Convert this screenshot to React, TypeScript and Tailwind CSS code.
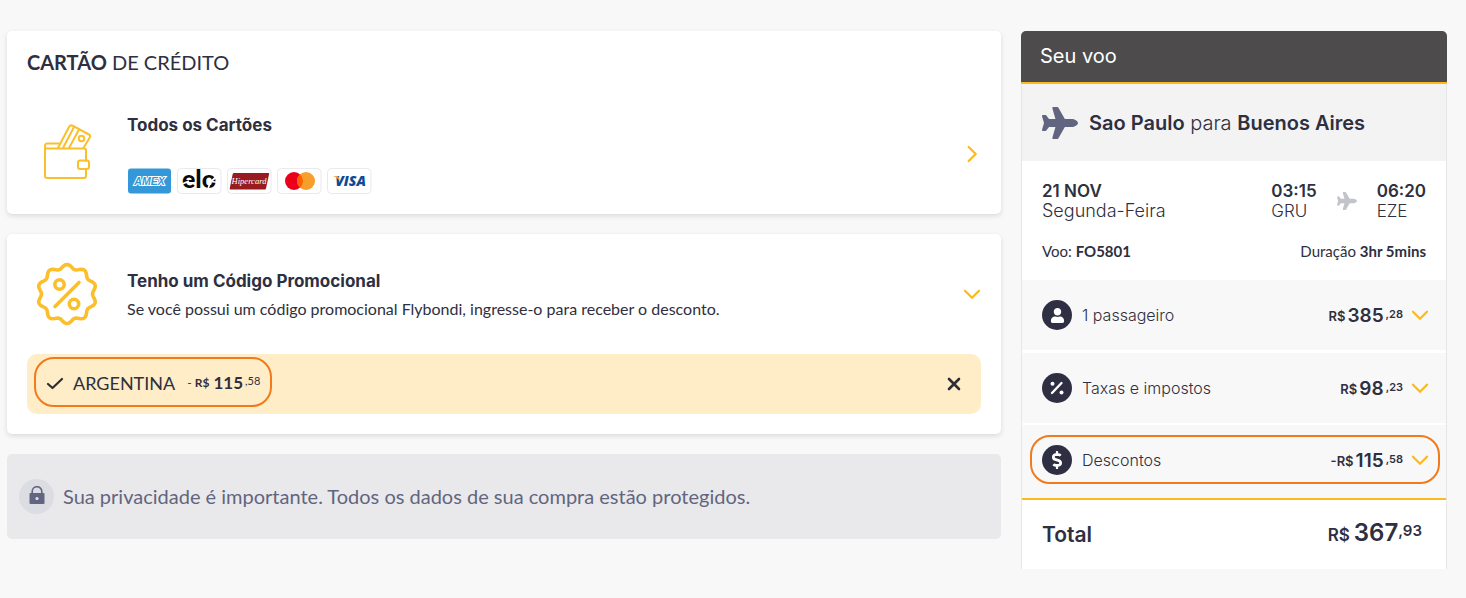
import type { ReactNode } from "react";
import { FaDollarSign, FaPlane, FaUser } from "react-icons/fa";

const badgePath =
  Array.from({ length: 120 }, (_, i) => {
    const angle = (i / 120) * Math.PI * 2;
    const radius = 27.5 + 2 * Math.cos(angle * 10);
    const x = 32 + radius * Math.sin(angle);
    const y = 32 - radius * Math.cos(angle);
    return `${i === 0 ? "M" : "L"}${x.toFixed(2)} ${y.toFixed(2)}`;
  }).join("") + "Z";

function Chevron({ className }: { className: string }) {
  return (
    <svg className={className} viewBox="0 0 18 18" fill="none" stroke="#fbba20" strokeWidth="2.3" strokeLinecap="round" strokeLinejoin="round" aria-hidden="true">
      <path d="M2 5.7 9 12.7 16 5.7" />
    </svg>
  );
}

function WalletIcon() {
  return (
    <svg className="mb-1 h-14 w-12" viewBox="0 0 48 56" fill="none" stroke="#fbbf2b" strokeWidth="2" strokeLinejoin="round" strokeLinecap="round" aria-hidden="true">
      <path d="M43 37V26.500a2 2 0 0 0-2-2H3.500a1.500 1.500 0 0 1-1.500-1.500V52a2 2 0 0 0 2 2H41a2 2 0 0 0 2-2v-6" />
      <path d="M2 23V21.500a2 2 0 0 1 2-2H16" />
      <path d="M15 24 26 3a3 3 0 0 1 4-1.200L46 10.500a2 2 0 0 1 1 2.500L40.500 24" />
      <path d="M20 24 31 3M26 24 36 5.500" />
      <circle cx="38.500" cy="14.500" r="2.800" />
      <rect x="35" y="36.500" width="11" height="8.500" rx="2" />
    </svg>
  );
}

function DiscountBadgeIcon() {
  return (
    <svg className="size-16" viewBox="0 0 64 64" fill="none" stroke="#fbbf2b" strokeWidth="3.600" strokeLinecap="round" strokeLinejoin="round" aria-hidden="true">
      <path d={badgePath} />
      <path d="M20 44.500 44 20.500" />
      <circle cx="24.500" cy="22.500" r="4.700" />
      <circle cx="39" cy="42" r="4.700" />
    </svg>
  );
}

function PercentIcon() {
  return (
    <svg className="size-4" viewBox="0 0 16 16" fill="white" aria-hidden="true">
      <path d="M3 13 12.500 3" stroke="white" strokeWidth="2.400" strokeLinecap="round" />
      <circle cx="3.500" cy="3.800" r="2" />
      <circle cx="12.500" cy="12.500" r="2" />
    </svg>
  );
}

function LockIcon() {
  return (
    <svg className="mb-1 h-[18px] w-4" viewBox="0 0 16 18" aria-hidden="true">
      <path d="M3.200 8V5.500a4.800 4.800 0 0 1 9.600 0V8" fill="none" stroke="#62657f" strokeWidth="1.600" />
      <rect x="0.500" y="7" width="15" height="11" rx="1" fill="#62657f" />
      <circle cx="8" cy="12.500" r="1.600" fill="#e2e2e8" />
    </svg>
  );
}

function CardLogos() {
  const frame = "h-[26px] w-11 overflow-visible";
  const border = <rect x="0.500" y="0.500" width="43.500" height="25" rx="4" fill="white" stroke="#e9e9ee" />;
  return (
    <span className="flex gap-1.5">
      <svg className={frame} viewBox="0 0 44 26" role="img" aria-label="Amex">
        <rect x="1" y="0.500" width="43" height="25" rx="3" fill="#3498d8" />
        <text x="22.500" y="17" textAnchor="middle" fontFamily="Liberation Sans, sans-serif" fontWeight="700" fontStyle="italic" fontSize="10.500" fill="#3498d8" stroke="white" strokeWidth="2" paintOrder="stroke">AMEX</text>
      </svg>
      <svg className={frame} viewBox="0 0 44 26" role="img" aria-label="Elo">
        {border}
        <text x="22" y="20" textAnchor="middle" fontFamily="Lato, sans-serif" fontWeight="900" fontSize="25" fill="#0a0a0a">elo</text>
        <path d="M3 17 12 13M34 13.500 39 9M34 13.500 42 14.500M33 15 31 21" stroke="white" strokeWidth="1.700" />
      </svg>
      <svg className={frame} viewBox="0 0 44 26" role="img" aria-label="Hipercard">
        {border}
        <path d="M7 5H41.500q.8 0 .6 1L39 20.500q-.2 1-1.200 1H3.500q-1 0-.8-1L5.700 6q.3-1 1.300-1Z" fill="#981b1f" />
        <text x="22" y="16" textAnchor="middle" fontFamily="Liberation Serif, serif" fontStyle="italic" fontSize="8.500" fill="white">Hipercard</text>
      </svg>
      <svg className={frame} viewBox="0 0 44 26" role="img" aria-label="Mastercard">
        {border}
        <circle cx="17" cy="13" r="9" fill="#eb001b" />
        <circle cx="29" cy="13" r="9" fill="#f79e2b" />
        <path d="M23 6.300a9 9 0 0 1 0 13.400 9 9 0 0 1 0-13.400Z" fill="#ff5f00" />
      </svg>
      <svg className={frame} viewBox="0 0 44 26" role="img" aria-label="Visa">
        {border}
        <text x="23.500" y="18" textAnchor="middle" fontFamily="Open Sans, sans-serif" fontWeight="800" fontStyle="italic" fontSize="14" fill="#0d4b95">VISA</text>
        <path d="M6 8h4q1.500 0 1.800 1.500L13 14Q11 9.500 6 8Z" fill="#f5a623" />
      </svg>
    </span>
  );
}

type PriceProps = { whole: string; cents: string; prefix?: string };

function Price({ whole, cents, prefix = "R$" }: PriceProps) {
  return (
    <span className="flex items-start pt-0.5 font-semibold leading-6">
      <span className="mr-0.5 text-[13px]">{prefix}</span>
      <span className="text-[19px]">{whole}</span>
      <span className="ml-0.5 text-[11px] leading-5">,{cents}</span>
    </span>
  );
}

function SummaryRow({ icon, label, ...price }: { icon: ReactNode; label: string } & PriceProps) {
  return (
    <button type="button" className="flex h-full w-full items-center text-left">
      <span className="flex size-[30px] items-center justify-center rounded-full bg-[#2e2f42] text-white">{icon}</span>
      <span className="ml-2.5 flex-1 text-base font-light">{label}</span>
      <Price {...price} />
      <Chevron className="ml-2 size-[18px]" />
    </button>
  );
}

export default function App() {
  return (
    <div className="flex min-h-screen items-start gap-5 bg-[#f8f8f8] pt-[31px] pr-[19px] pb-7 pl-[7px] font-['Lato',sans-serif] text-[#2e2f40]">
      <main className="flex min-w-0 flex-1 flex-col gap-5">
        <section className="rounded-[5px] bg-white p-5 shadow-[0_2px_5px_rgba(0,0,0,0.12)]">
          <h2 className="text-xl leading-[22px]"><strong className="font-bold">CARTÃO</strong> DE CRÉDITO</h2>
          <button type="button" className="mt-10 flex w-full items-center text-left">
            <span className="flex w-20 justify-center"><WalletIcon /></span>
            <span className="ml-5 flex flex-1 flex-col gap-[31px]">
              <span className="font-['Inter',sans-serif] text-[17px] font-bold leading-6">Todos os Cartões</span>
              <CardLogos />
            </span>
            <Chevron className="size-[18px] -rotate-90" />
          </button>
        </section>

        <section className="rounded-[5px] bg-white p-5 shadow-[0_2px_5px_rgba(0,0,0,0.12)]">
          <button type="button" className="flex h-20 w-full items-center text-left">
            <span className="flex w-20 justify-center"><DiscountBadgeIcon /></span>
            <span className="ml-5 flex flex-1 flex-col gap-1 pt-0.5">
              <span className="font-['Inter',sans-serif] text-[17px] font-bold leading-6">Tenho um Código Promocional</span>
              <span className="text-base leading-6">Se você possui um código promocional Flybondi, ingresse-o para receber o desconto.</span>
            </span>
            <Chevron className="size-[18px]" />
          </button>
          <div className="mt-5 flex h-[60px] justify-between rounded-[10px] bg-[#feedc7] pt-[3px] pr-5 pb-[7px] pl-[7px]">
            <div className="flex items-center rounded-[20px] border-2 border-[#f07a1c] px-2.5 pt-0.5">
              <svg className="h-4 w-[18px]" viewBox="0 0 18 16" fill="none" stroke="#2e2d33" strokeWidth="2.200" strokeLinecap="round" strokeLinejoin="round" aria-hidden="true">
                <path d="M2 9 6.500 13 16 4" />
              </svg>
              <span className="ml-[9px] text-lg">ARGENTINA</span>
              <span className="ml-3 flex items-start leading-6">
                <span className="mr-1 text-xs leading-6">- <b>R$</b></span>
                <b className="text-[17px] leading-6">115</b>
                <span className="ml-0.5 text-[11px] leading-5">,58</span>
              </span>
            </div>
            <button type="button" aria-label="Remover código" className="flex items-center pt-1">
              <svg className="size-3.5" viewBox="0 0 14 14" stroke="#2e2d33" strokeWidth="2.600" strokeLinecap="round" aria-hidden="true">
                <path d="M2 2 12 12M12 2 2 12" />
              </svg>
            </button>
          </div>
        </section>

        <section className="flex h-[85px] items-center rounded-[5px] bg-[#e9e9eb] px-3 text-[#62657f]">
          <span className="flex size-[35px] items-center justify-center rounded-full bg-[#dcdce3]"><LockIcon /></span>
          <p className="ml-[9px] pb-0.5 text-xl">Sua privacidade é importante. Todos os dados de sua compra estão protegidos.</p>
        </section>
      </main>

      <aside className="w-[426px] shrink-0 font-['Inter',sans-serif]">
        <h2 className="rounded-t-[5px] border-b-2 border-[#fbba20] bg-[#4d4b4b] px-[19px] py-3 text-xl leading-[27px] text-white">Seu voo</h2>
        <div className="border-x border-[#e6e6e6] bg-white">
          <div className="flex h-[77px] items-center bg-[#f3f3f3] px-5">
            <FaPlane className="h-8 w-9 text-[#62657f]" preserveAspectRatio="none" />
            <p className="ml-[11px] text-xl font-light"><b className="font-semibold">Sao Paulo</b> para <b className="font-semibold">Buenos Aires</b></p>
          </div>

          <div className="h-[119px] px-5 pt-5">
            <div className="flex text-[17px] leading-5 font-light">
              <p className="flex-1"><b className="block font-semibold">21 NOV</b><span className="text-lg leading-5">Segunda-Feira</span></p>
              <p><b className="block font-semibold">03:15</b>GRU</p>
              <FaPlane className="mx-5 mt-2.5 size-5 text-[#c3c4ca]" />
              <p><b className="block font-semibold">06:20</b>EZE</p>
            </div>
            <div className="mt-[18px] flex justify-between font-['Lato',sans-serif] text-[15px] leading-6">
              <p>Voo: <b>FO5801</b></p>
              <p>Duração <b>3hr 5mins</b></p>
            </div>
          </div>

          <div className="h-[70px] bg-[#f8f8f8] pr-[17px] pl-5">
            <SummaryRow icon={<FaUser className="size-[15px]" />} label="1 passageiro" whole="385" cents="28" />
          </div>
          <div className="mt-[3px] h-[70px] bg-[#f8f8f8] pr-[17px] pl-5">
            <SummaryRow icon={<PercentIcon />} label="Taxas e impostos" whole="98" cents="23" />
          </div>
          <div className="mt-0.5 h-[75px] border-b-2 border-[#fbba20] bg-[#f8f8f8] pt-2.5 pr-1.5 pl-2">
            <div className="h-[49px] rounded-[20px] border-2 border-[#f07a1c] pr-[9px] pl-2.5">
              <SummaryRow icon={<FaDollarSign className="size-[18px]" />} label="Descontos" prefix="-R$" whole="115" cents="58" />
            </div>
          </div>
          <div className="flex h-[69px] items-center justify-between pr-6 pl-5 font-semibold">
            <span className="text-[21px]">Total</span>
            <span className="flex items-start leading-8">
              <span className="mr-1 text-[17px] leading-9">R$</span>
              <span className="text-2xl leading-8">367</span>
              <span className="text-[15px] leading-7">,93</span>
            </span>
          </div>
        </div>
      </aside>
    </div>
  );
}
